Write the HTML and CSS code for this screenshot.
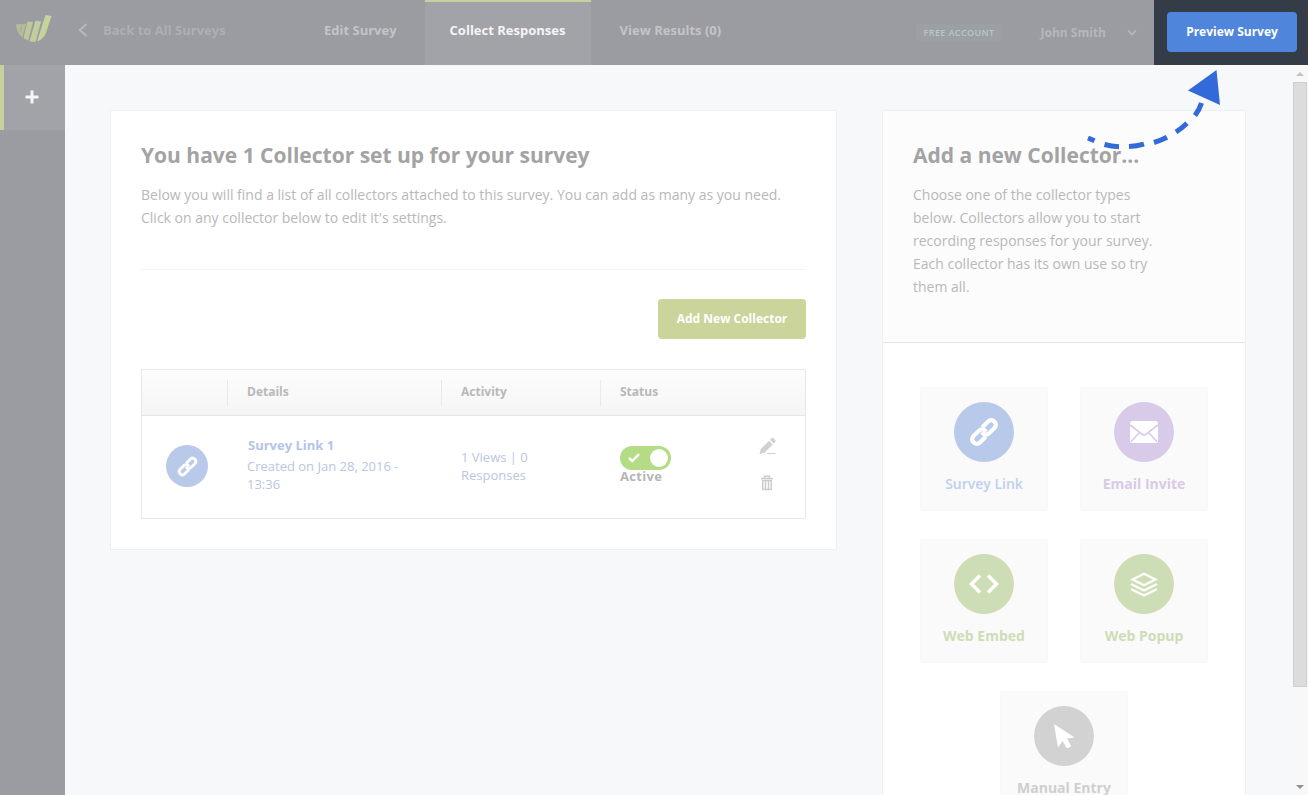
FILE: index.html
```html
<!DOCTYPE html>
<html lang="en">
<head>
  <meta charset="UTF-8">
  <meta name="viewport" content="width=device-width, initial-scale=1.0">
  <title>Collect Responses</title>
  <link rel="stylesheet" href="styles.css">
</head>
<body>
  <svg class="sprite" width="0" height="0">
    <symbol id="icon-link" viewBox="0 0 30 30">
      <g fill="none" stroke="currentColor" stroke-width="4.2" transform="rotate(-45 15 15)">
        <path d="M13.2 19.500H4.300a4.300 4.300 0 0 1-4-4.300v-.4a4.300 4.300 0 0 1 4-4.300h8.100a4.400 4.400 0 0 1 4.400 4.400v1.500"/>
        <path d="M16.800 10.500h8.900a4.300 4.300 0 0 1 4 4.300v.4a4.300 4.300 0 0 1-4 4.300h-8.100a4.400 4.400 0 0 1-4.400-4.400v-1.500"/>
      </g>
    </symbol>
  </svg>

  <header class="header">
    <a class="logo" href="#">
      <svg width="36" height="28" viewBox="0 0 36 28">
        <path d="M0 9.500l6-.5-1.500 4 .8 8.500C2 18.500.3 14 0 9.500z" fill="#b3bf99"/>
        <path d="M5.800 9.500l4.200-1L6.500 22 4.800 20.500z" fill="#b3bf99"/>
        <path d="M11.500 6.500l5.500.5-4.800 18.500c-1.600-.5-3.200-1.300-4.700-2.500z" fill="#bbc89a"/>
        <path d="M19.500 5.500l5.500 1-5.300 20.200c-2.200.3-4.200.2-6.200-.5z" fill="#c1ce9a"/>
        <path d="M29.500 0l6 1-5 15.500c-1.500 5-5 8.500-9.500 10z" fill="#c5d49a"/>
      </svg>
    </a>
    <a class="back" href="#">
      <svg width="10" height="14" viewBox="0 0 10 14"><path d="M8.500 1L2 7l6.500 6" fill="none" stroke="#b7b8bd" stroke-width="2.200"/></svg>
      <span>Back to All Surveys</span>
    </a>
    <nav class="tabs">
      <a class="tab" href="#">Edit Survey</a>
      <a class="tab active" href="#">Collect Responses</a>
      <a class="tab" href="#">View Results (0)</a>
    </nav>
    <div class="account">
      <span class="plan">FREE ACCOUNT</span>
      <span class="user">John Smith</span>
      <svg width="10" height="8" viewBox="0 0 10 8"><path d="M1 1.500l4 4 4-4" fill="none" stroke="#b9babf" stroke-width="1.600"/></svg>
    </div>
    <div class="preview">
      <button class="btn btn-preview">Preview Survey</button>
      <svg class="pointer" width="140" height="90" viewBox="0 0 140 90">
        <path class="dashes" d="M8 73l6.500 2.800M24.500 79.500q7 2 14.500 2.200M49 81.500q7.500-.3 15-2.300M74 77.500q7-2.200 13-5.300M96 67q6-4 11-8.800M115 50.500q4.500-6 6.500-12.500"/>
        <path d="M136.500 5L108 25.500 140 40z" fill="#326ad9"/>
      </svg>
    </div>
  </header>

  <div class="page">
    <aside class="sidebar">
      <a class="add" href="#">
        <svg width="14" height="14" viewBox="0 0 14 14"><path d="M7 .5v13M.5 7h13" stroke="#f6f6f7" stroke-width="3"/></svg>
      </a>
    </aside>

    <main class="content">
      <section class="card collectors">
        <h2>You have 1 Collector set up for your survey</h2>
        <p>Below you will find a list of all collectors attached to this survey. You can add as many as you need.<br>Click on any collector below to edit it's settings.</p>
        <div class="toolbar">
          <button class="btn btn-add">Add New Collector</button>
        </div>
        <div class="table">
          <div class="row head">
            <div class="cell"></div>
            <div class="cell">Details</div>
            <div class="cell">Activity</div>
            <div class="cell">Status</div>
          </div>
          <div class="row item">
            <div class="cell-icon">
              <span class="circle small blue"><svg width="21" height="21"><use href="#icon-link"/></svg></span>
            </div>
            <div class="cell-details">
              <strong>Survey Link 1</strong>
              <span>Created on Jan 28, 2016 - 13:36</span>
            </div>
            <div class="cell-activity">1 Views | 0 Responses</div>
            <div class="cell-status">
              <div class="toggle">
                <svg width="12" height="10" viewBox="0 0 12 10"><path d="M1 5l3.200 3L11 1.200" fill="none" stroke="#fff" stroke-width="2.400"/></svg>
                <span class="knob"></span>
              </div>
              <strong>Active</strong>
            </div>
            <div class="cell-actions">
              <svg width="18" height="18" viewBox="0 0 18 18" fill="#cfd0d8">
                <path d="M.5 17l1.300-5L10 3.800l3.700 3.700L5.500 15.700zM11 2.800L12.500 1.300q1-.9 2 0L16.200 3q.9 1 0 2l-1.500 1.500zM8 16h8.500v1H8z"/>
              </svg>
              <svg width="12" height="16" viewBox="0 0 12 16" fill="none" stroke="#cbccd2">
                <path d="M0 3.500h12M3.500 3V1.200h5V3" stroke-width="1.400"/>
                <path d="M1.800 5.500h8.400v9H1.800zM4.500 6v8M7.500 6v8" stroke-width="1.500"/>
              </svg>
            </div>
          </div>
        </div>
      </section>

      <section class="card types">
        <div class="types-intro">
          <h2>Add a new Collector...</h2>
          <p>Choose one of the collector types below. Collectors allow you to start recording responses for your survey. Each collector has its own use so try them all.</p>
        </div>
        <div class="types-list">
          <a class="type type-link" href="#">
            <span class="circle blue"><svg width="30" height="30"><use href="#icon-link"/></svg></span>
            Survey Link
          </a>
          <a class="type type-email" href="#">
            <span class="circle purple">
              <svg width="28" height="22" viewBox="0 0 28 22">
                <rect width="28" height="22" rx="2.500" fill="#fff"/>
                <path d="M0 4l11.500 8.800q2.500 2 5 0L28 4M1 20.500l8.500-9M27 20.500l-8.500-9" fill="none" stroke="#d8cae9" stroke-width="1.700"/>
              </svg>
            </span>
            Email Invite
          </a>
          <a class="type type-web" href="#">
            <span class="circle green">
              <svg width="30" height="20" viewBox="0 0 30 20"><path d="M11 1.500L2.500 10l8.500 8.500M19 1.500l8.500 8.500-8.500 8.500" fill="none" stroke="#fff" stroke-width="3.400"/></svg>
            </span>
            Web Embed
          </a>
          <a class="type type-web" href="#">
            <span class="circle green">
              <svg width="28" height="25" viewBox="0 0 28 25"><path d="M14 1.700L25.500 7.500 14 13.300 2.500 7.500zM1 12l13 6.500L27 12M1 17l13 6.500L27 17" fill="none" stroke="#fff" stroke-width="2.300"/></svg>
            </span>
            Web Popup
          </a>
          <a class="type type-manual" href="#">
            <span class="circle gray">
              <svg width="22" height="26" viewBox="0 0 22 26"><path d="M1 1l20.500 13.500-7.500 1 4 7.500q-2 2.500-4.500 1.800L9.500 18 5 24.500z" fill="#fff"/></svg>
            </span>
            Manual Entry
          </a>
        </div>
      </section>
    </main>

    <div class="scrollbar">
      <span class="arrow up"></span>
      <span class="thumb"></span>
      <span class="arrow down"></span>
    </div>
  </div>
</body>
</html>
```
FILE: styles.css
```css
* {
  box-sizing: border-box;
}

body {
  margin: 0;
  height: 100vh;
  overflow: hidden;
  display: flex;
  flex-direction: column;
  background-color: #f7f8fa;
  font-family: "Open Sans", sans-serif;
  font-size: 14px;
  color: #b8b8b8;
}

a {
  color: inherit;
  text-decoration: none;
}

svg {
  display: block;
  flex: none;
}

.sprite {
  position: absolute;
}

/* Header */
.header {
  display: flex;
  flex: none;
  height: 65px;
  background-color: #9b9ba2;
  font-size: 13px;
  font-weight: 700;
}

.logo {
  width: 65px;
  padding: 15px 0 0 16px;
}

.back {
  display: flex;
  align-items: center;
  width: 231px;
  gap: 15px;
  padding: 0 0 5px 13px;
  color: #acb0b6;
}

.tabs {
  display: flex;
}

.tab {
  padding: 21px 28px 0 29px;
  color: #c4c4c8;
}

.tab:first-child {
  padding-left: 28px;
}

.tab.active {
  width: 166px;
  padding: 19px 24px 0 25px;
  border-top: 2px solid #c6d1a0;
  background-color: #a2a2a9;
  color: #f5f5f6;
}

.account {
  display: flex;
  align-items: center;
  margin-left: auto;
  padding-right: 17px;
  color: #b6b7bc;
  font-size: 12px;
}

.plan {
  height: 17px;
  margin-right: 39px;
  padding: 0 7px 0 8px;
  border-radius: 3px;
  background-color: #9ba0a7;
  color: #bfc3c6;
  font-size: 9px;
  font-weight: 600;
  letter-spacing: 0.4px;
  line-height: 17px;
}

.user {
  margin: 0 21px 1px 0;
}

.preview {
  position: relative;
  width: 154px;
  padding: 12px 0 0 13px;
  background-color: #343c48;
}

.btn {
  height: 40px;
  padding: 0 0 1px;
  border: none;
  border-radius: 4px;
  color: #fff;
  font-family: inherit;
  font-size: 12px;
  font-weight: 700;
}

.btn-preview {
  width: 130px;
  background-color: #4f86dc;
}

.pointer {
  position: absolute;
  top: 65px;
  left: -74px;
  z-index: 1;
}

.dashes {
  fill: none;
  stroke: #326ad9;
  stroke-width: 5;
}

/* Page */
.page {
  display: flex;
  flex: 1;
  min-height: 0;
}

.sidebar {
  width: 65px;
  background-color: #9b9ba2;
}

.add {
  display: flex;
  align-items: center;
  height: 65px;
  padding: 0 0 2px 21px;
  border-left: 4px solid #c6d1a0;
  background-color: #a2a2a9;
}

.content {
  display: flex;
  flex: 1;
  align-items: flex-start;
  gap: 45px;
  padding: 45px 45px 0;
}

.card {
  border: 1px solid #eff0f2;
  background-color: #fff;
}

h2 {
  margin: 0;
  color: #a3a3a3;
  font-size: 21px;
  font-weight: 700;
  line-height: 30px;
}

p {
  margin: 13px 0 0;
  line-height: 23px;
}

.collectors {
  width: 727px;
  height: 440px;
  padding: 29px 30px 0;
}

.toolbar {
  display: flex;
  justify-content: flex-end;
  margin: 40px 0 30px;
  padding-top: 29px;
  border-top: 1px solid #f4f4f4;
}

.btn-add {
  width: 148px;
  background-color: #cad49b;
}

/* Table */
.table {
  height: 150px;
  border: 1px solid #e8e8e8;
}

.row {
  display: grid;
  grid-template-columns: 85px 214px 159px 1fr;
}

.head {
  align-items: center;
  height: 46px;
  border-bottom: 1px solid #e6e6e6;
  background: linear-gradient(#fdfdfd, #f5f5f5);
  font-size: 12px;
  font-weight: 700;
}

.head .cell {
  height: 26px;
  padding-left: 19px;
  border-left: 1px solid #e9e9e9;
  line-height: 24px;
}

.head .cell:first-child {
  border-left: none;
}

.item {
  grid-template-columns: 105px 214px 159px 1fr 56px;
  height: 102px;
  color: #bbc6e0;
  font-size: 13px;
  line-height: 18px;
}

.cell-icon {
  padding: 29px 0 0 24px;
}

.cell-details {
  padding: 20px 50px 0 0;
}

.cell-details strong {
  display: block;
  margin: 0 0 3px 1px;
  color: #b4c4e8;
}

.cell-activity {
  padding: 32px 80px 0 0;
}

.cell-status {
  padding-top: 30px;
  color: #b5b5b5;
}

.cell-status strong {
  display: block;
  margin-top: -3px;
  letter-spacing: 0.3px;
}

.toggle {
  display: flex;
  align-items: center;
  justify-content: space-between;
  width: 51px;
  height: 24px;
  padding: 0 3px 0 8px;
  border-radius: 12px;
  background-color: #b3dc85;
}

.knob {
  width: 18px;
  height: 18px;
  border-radius: 50%;
  background-color: #fff;
}

.cell-actions {
  display: flex;
  flex-direction: column;
  gap: 20px;
  padding: 21px 0 0 10px;
}

.cell-actions svg:last-child {
  margin-left: 2px;
}

/* Collector types */
.types {
  width: 364px;
  height: 740px;
}

.types-intro {
  height: 232px;
  padding: 29px 80px 0 30px;
  border-bottom: 1px solid #e6e6e6;
  background-color: #fcfcfc;
}

.types-list {
  display: flex;
  flex-wrap: wrap;
  justify-content: center;
  gap: 28px 32px;
  padding-top: 44px;
}

.type {
  display: flex;
  flex-direction: column;
  align-items: center;
  width: 128px;
  height: 124px;
  padding-top: 14px;
  border: 1px solid #f8f8f8;
  border-radius: 3px;
  background-color: #fafafa;
  font-weight: 700;
  line-height: 19px;
}

.circle {
  display: flex;
  align-items: center;
  justify-content: center;
  width: 60px;
  height: 60px;
  margin-bottom: 12px;
  border-radius: 50%;
  color: #fff;
}

.small {
  width: 42px;
  height: 42px;
}

.blue {
  background-color: #b8c9e9;
}

.purple {
  background-color: #d8cae9;
}

.green {
  background-color: #cdddb5;
}

.gray {
  background-color: #d2d2d2;
}

.type-link {
  color: #bdd0ee;
  font-weight: 600;
}

.type-email {
  color: #d8cae6;
}

.type-web {
  color: #cdddb5;
}

.type-manual {
  color: #cfcfcf;
}

/* Scrollbar */
.scrollbar {
  display: flex;
  flex-direction: column;
  align-items: center;
  width: 17px;
  padding: 7px 1px 6px 2px;
  background-color: #f8f8f8;
}

.thumb {
  width: 14px;
  height: 605px;
  margin-top: 6px;
  border: 1px solid #cfcfcf;
  background-color: #dcdcdc;
}

.arrow {
  border: 4px solid transparent;
}

.up {
  border-top: none;
  border-bottom-color: #c4c4c4;
}

.down {
  margin-top: auto;
  border-bottom: none;
  border-top-color: #8f8f8f;
}
```
